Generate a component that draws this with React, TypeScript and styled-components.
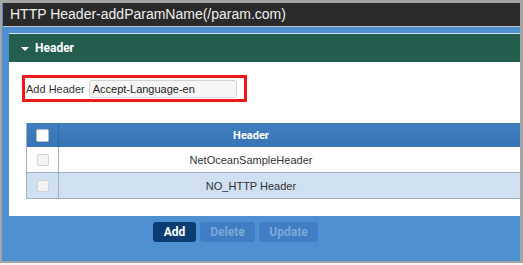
import React from 'react'
import styled, { createGlobalStyle } from 'styled-components'

const GlobalStyle = createGlobalStyle`
  html, body {
    margin: 0;
    padding: 0;
    background: #f4f4f4;
  }
  * {
    box-sizing: border-box;
  }
`

const Frame = styled.section`
  width: 523px;
  height: 263px;
  display: flex;
  flex-direction: column;
  border-style: solid;
  border-color: #a4a4a4;
  border-width: 3px 3px 2px 2px;
  background: #4a8dcf;
  font-family: 'Liberation Sans', Arial, sans-serif;
`

const TitleBar = styled.header`
  height: 24px;
  flex: none;
  margin-left: 1px;
  padding-left: 7px;
  line-height: 23px;
  font-size: 14px;
  color: #f0f0f0;
  background: #2a2a2a;
  border-bottom: 1px solid #c4c4c4;
  white-space: nowrap;
`

const Body = styled.div`
  flex: 1;
  display: flex;
  flex-direction: column;
  padding: 6px 0 0 7px;
  background-color: #4b8fd0;
  background-image: repeating-conic-gradient(#5194d3 0 25%, #4a8ccd 0 50%);
  background-size: 2px 2px;
`

const Panel = styled.div`
  display: flex;
  flex-direction: column;
`

const PanelHead = styled.div`
  height: 29px;
  display: flex;
  align-items: center;
  gap: 6px;
  padding-left: 12px;
  background: #245e4f;
  border-top: 1px solid #d7e5f2;
  color: #ffffff;
  font-family: Roboto, 'Liberation Sans', sans-serif;
  font-weight: 700;
  font-size: 12px;
`

const Caret = styled.span`
  width: 0;
  height: 0;
  border-left: 4px solid transparent;
  border-right: 4px solid transparent;
  border-top: 4px solid #ffffff;
  margin-top: 1px;
`

const PanelBody = styled.div`
  background: #ffffff;
  padding: 13px 0 17px 0;
`

const FieldBox = styled.div`
  margin-left: 13px;
  width: 225px;
  height: 27px;
  display: flex;
  align-items: center;
  gap: 4px;
  padding-left: 1px;
  border: 3px solid #f01818;
  font-size: 11px;
  color: #333333;
`

const TextInput = styled.div`
  width: 148px;
  height: 18px;
  line-height: 16px;
  padding-left: 3px;
  background: #f6f6f6;
  border: 1px solid #d2d2d2;
  border-radius: 3px;
  font-size: 11px;
  color: #222222;
`

const Table = styled.div`
  margin: 21px 0 0 17px;
  display: grid;
  grid-template-columns: 31px 1fr;
  border-left: 1px solid #9fb1c6;
  font-size: 11px;
`

const HeadCell = styled.div<{ $center?: boolean }>`
  height: 24px;
  display: flex;
  align-items: center;
  justify-content: center;
  padding-right: ${p => (p.$center ? '77px' : '0')};
  background: linear-gradient(#3f7fc0, #3774b5);
  border-left: ${p => (p.$center ? '1px solid #2f6aa8' : '0')};
  color: #ffffff;
  font-family: Roboto, 'Liberation Sans', sans-serif;
  font-weight: 700;
  font-size: 11px;
`

const Cell = styled.div<{ $alt?: boolean; $center?: boolean }>`
  height: 26px;
  display: flex;
  align-items: center;
  justify-content: center;
  padding-right: ${p => (p.$center ? '77px' : '0')};
  background: ${p => (p.$alt ? '#cfe0f1' : '#ffffff')};
  border-bottom: 1px solid #9fb1c6;
  border-left: ${p => (p.$center ? '1px solid #9fb1c6' : '0')};
  color: #333333;
`

const Check = styled.span<{ $head?: boolean }>`
  width: ${p => (p.$head ? '13px' : '12px')};
  height: ${p => (p.$head ? '13px' : '12px')};
  background: ${p => (p.$head ? '#ffffff' : '#f2f2f2')};
  border: 1px solid ${p => (p.$head ? '#bcbcbc' : '#d4d4d4')};
  border-radius: 2px;
`

const ButtonBar = styled.div`
  display: flex;
  gap: 4px;
  padding: 6px 0 0 144px;
`

const Button = styled.button<{ $w: number; $disabled?: boolean }>`
  width: ${p => p.$w}px;
  height: 20px;
  padding: 0;
  border: 0;
  border-radius: 3px;
  background: ${p => (p.$disabled ? '#3f7ec2' : '#0b3c72')};
  color: ${p => (p.$disabled ? '#7aa9d8' : '#ffffff')};
  font-family: Roboto, 'Liberation Sans', sans-serif;
  font-weight: 700;
  font-size: 12px;
`

const rows = ['NetOceanSampleHeader', 'NO_HTTP Header']

export default function App() {
  return (
    <>
      <GlobalStyle />
      <Frame>
        <TitleBar>HTTP Header-addParamName(/param.com)</TitleBar>
        <Body>
          <Panel>
            <PanelHead>
              <Caret />
              Header
            </PanelHead>
            <PanelBody>
              <FieldBox>
                Add Header
                <TextInput>Accept-Language-en</TextInput>
              </FieldBox>
              <Table>
                <HeadCell>
                  <Check $head />
                </HeadCell>
                <HeadCell $center>Header</HeadCell>
                {rows.map((name, i) => (
                  <React.Fragment key={name}>
                    <Cell $alt={i % 2 === 1}>
                      <Check />
                    </Cell>
                    <Cell $alt={i % 2 === 1} $center>
                      {name}
                    </Cell>
                  </React.Fragment>
                ))}
              </Table>
            </PanelBody>
          </Panel>
          <ButtonBar>
            <Button $w={43}>Add</Button>
            <Button $w={55} $disabled>
              Delete
            </Button>
            <Button $w={59} $disabled>
              Update
            </Button>
          </ButtonBar>
        </Body>
      </Frame>
    </>
  )
}
